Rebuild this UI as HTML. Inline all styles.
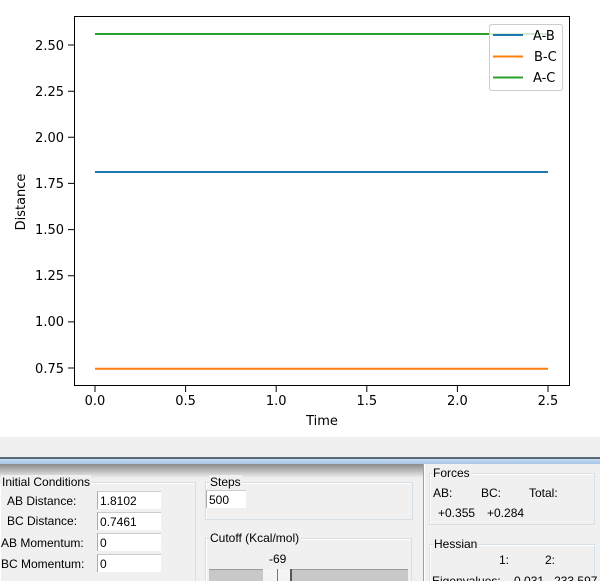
<!DOCTYPE html>
<html><head><style>
html,body{margin:0;width:600px;height:581px;overflow:hidden}
body{background:#fff;position:relative;font-family:"Liberation Sans",sans-serif}
.p{position:absolute;white-space:nowrap}
.t{position:absolute;white-space:nowrap;font-size:12px;line-height:14px;color:#000}
.gb{position:absolute;border:1px solid #d5dfe5;box-shadow:inset 1px 1px 0 #fff}
.gl{position:absolute;white-space:nowrap;background:#f0f0f0;padding:0 1px;font-size:12px;line-height:14px}
.in{position:absolute;background:#fff;border-left:1px solid #aaa;border-top:1px solid #ccc;height:18px;line-height:18px;font-size:12px;padding-left:2px;box-sizing:border-box;white-space:nowrap}
</style></head><body>
<svg class="p" style="left:0;top:0" width="600" height="437" font-family="DejaVu Sans, sans-serif" font-size="13">
<rect width="600" height="437" fill="#fff"/>
<g fill="none" stroke-width="2">
<path d="M95 34 L548 34" stroke="#2ca02c"/>
<path d="M95 172 L548 172" stroke="#1f77b4"/>
<path d="M95 368.7 L548 368.7" stroke="#ff7f0e"/>
</g>
<rect x="74.5" y="16.5" width="495" height="369" fill="none" stroke="#000" stroke-width="1"/>
<g stroke="#000">
<path d="M68 45H74M68 91.2H74M68 137.3H74M68 183.4H74M68 229.6H74M68 275.7H74M68 321.9H74M68 368H74"/>
<path d="M95 386V392M185.6 386V392M276.2 386V392M366.8 386V392M457.4 386V392M548 386V392"/>
</g>
<g text-anchor="end" fill="#000">
<text x="64" y="50">2.50</text><text x="64" y="96">2.25</text><text x="64" y="142">2.00</text><text x="64" y="188">1.75</text><text x="64" y="234">1.50</text><text x="64" y="280">1.25</text><text x="64" y="326">1.00</text><text x="64" y="373">0.75</text>
</g>
<g text-anchor="middle" fill="#000">
<text x="95" y="405">0.0</text><text x="185.6" y="405">0.5</text><text x="276.2" y="405">1.0</text><text x="366.8" y="405">1.5</text><text x="457.4" y="405">2.0</text><text x="548" y="405">2.5</text>
<text x="322" y="425">Time</text>
<text transform="translate(25,202) rotate(-90)">Distance</text>
</g>
<rect x="489.5" y="24.5" width="73" height="66" rx="2" fill="#fff" fill-opacity="0.8" stroke="#ccc"/>
<path d="M493 35H523" stroke="#1f77b4" stroke-width="2"/>
<path d="M493 56.5H523" stroke="#ff7f0e" stroke-width="2"/>
<path d="M493 77.5H523" stroke="#2ca02c" stroke-width="2"/>
<text x="533" y="40">A-B</text><text x="534" y="61">B-C</text><text x="533" y="82">A-C</text>
</svg>
<div class="p" style="left:0;top:437px;width:600px;height:144px;background:#f0f0f0"></div>
<div class="p" style="left:0;top:457px;width:600px;height:2px;background:#5a6a78"></div>
<div class="p" style="left:0;top:459px;width:600px;height:5px;background:linear-gradient(#c4daf0,#a8c6e6)"></div>
<div class="p" style="left:0;top:464px;width:423px;height:14px;background:linear-gradient(#8a8a8a,#f0f0f0)"></div>
<div class="p" style="left:423px;top:464px;width:1px;height:117px;background:#a0a0a0"></div>
<div class="p" style="left:424px;top:464px;width:1px;height:117px;background:#fff"></div>

<div class="gb" style="left:-1px;top:482px;width:195px;height:110px"></div>
<div class="gl" style="left:1px;top:475px">Initial Conditions</div>
<div class="t" style="left:7px;top:494px">AB Distance:</div>
<div class="t" style="left:7px;top:514px">BC Distance:</div>
<div class="t" style="left:1px;top:536px">AB Momentum:</div>
<div class="t" style="left:1px;top:557px">BC Momentum:</div>
<div class="in" style="left:97px;top:491px;width:64px">1.8102</div>
<div class="in" style="left:97px;top:512px;width:64px">0.7461</div>
<div class="in" style="left:97px;top:533px;width:64px">0</div>
<div class="in" style="left:97px;top:554px;width:64px">0</div>

<div class="gb" style="left:205px;top:482px;width:206px;height:36px"></div>
<div class="gl" style="left:209px;top:475px">Steps</div>
<div class="in" style="left:206px;top:490px;width:40px">500</div>

<div class="gb" style="left:205px;top:538px;width:205px;height:60px"></div>
<div class="gl" style="left:209px;top:531px">Cutoff (Kcal/mol)</div>
<div class="t" style="left:269px;top:552px">-69</div>
<div class="p" style="left:209px;top:569px;width:199px;height:13px;background:#c8c8c8;border-top:1px solid #999"></div>
<div class="p" style="left:263px;top:569px;width:27px;height:13px;background:#f4f4f4;border-right:2px solid #555"></div>
<div class="p" style="left:277px;top:569px;width:1px;height:13px;background:#777"></div>

<div class="gb" style="left:429px;top:473px;width:164px;height:50px"></div>
<div class="gl" style="left:432px;top:466px">Forces</div>
<div class="t" style="left:433px;top:486px">AB:</div>
<div class="t" style="left:481px;top:486px">BC:</div>
<div class="t" style="left:529px;top:486px">Total:</div>
<div class="t" style="left:438px;top:506px">+0.355</div>
<div class="t" style="left:487px;top:506px">+0.284</div>

<div class="gb" style="left:429px;top:544px;width:164px;height:50px"></div>
<div class="gl" style="left:433px;top:537px">Hessian</div>
<div class="t" style="left:499px;top:553px">1:</div>
<div class="t" style="left:545px;top:553px">2:</div>
<div class="t" style="left:432px;top:574px">Eigenvalues:&nbsp;&nbsp;&nbsp;&nbsp;0.031&nbsp;&nbsp;&nbsp;233.597</div>
</body></html>
